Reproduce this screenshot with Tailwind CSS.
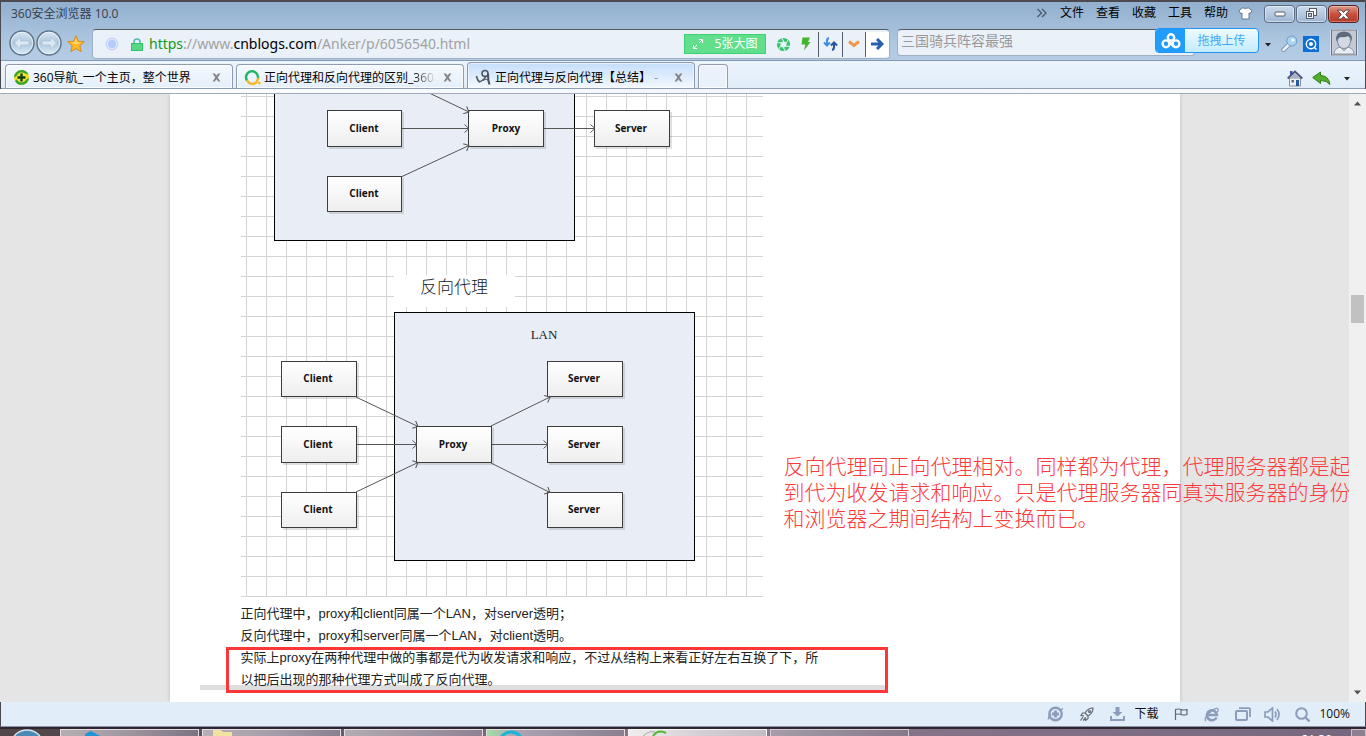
<!DOCTYPE html>
<html lang="zh-CN">
<head>
<meta charset="utf-8">
<title>正向代理与反向代理【总结】</title>
<script src="https://cdn.jsdelivr.net/npm/@tailwindcss/browser@4"></script>
</head>
<body class="flex h-screen flex-col overflow-hidden bg-[#e5e5e5] font-['Open_Sans','Noto_Sans_CJK_SC',sans-serif] text-xs text-black">

<header class="shrink-0 border-x border-t-2 border-[#4a4a50] bg-linear-to-b from-[#92afce] via-[#b0c9e2] to-[#bcd3ea]">
  <!-- title bar -->
  <div class="flex h-[27px] items-start pr-1.5 pl-2.5">
    <h1 class="pt-1 leading-4 text-[#33404f]">360安全浏览器 10.0</h1>
    <nav class="ml-auto flex gap-3 pt-[3px] leading-4" aria-label="菜单">
      <button aria-label="更多" class="w-3"><svg width="12" height="10" viewBox="0 0 12 10" fill="none" stroke="#4c5b6d" stroke-width="1.3"><path d="M1.500 1l4 4-4 4M6 1l4 4-4 4"/></svg></button>
      <button>文件</button><button>查看</button><button>收藏</button><button>工具</button><button>帮助</button>
    </nav>
    <button class="mt-[5px] ml-2.5" aria-label="皮肤"><svg width="15" height="13" viewBox="0 0 15 13"><path d="M4.500 1h1.500q1.500 1.500 3 0h1.500l3.500 2.500-1.500 3-1.500-.5v6h-7v-6l-1.500.5-1.500-3z" fill="#fff" stroke="#5c6f88" stroke-width=".9"/></svg></button>
    <div class="mt-[3px] ml-[11px] flex gap-px">
      <button aria-label="最小化" class="grid h-[18px] w-[31px] place-items-center rounded-sm border border-[#596b83] bg-linear-to-b from-[#cbdaea] via-[#b5c9df] to-[#9db7d3] inset-ring inset-ring-white/50"><svg width="12" height="6"><rect x="1" y="1" width="10" height="4" rx="1" fill="#fff" stroke="#555c68"/></svg></button>
      <button aria-label="还原" class="grid h-[18px] w-[31px] place-items-center rounded-sm border border-[#596b83] bg-linear-to-b from-[#cbdaea] via-[#b5c9df] to-[#9db7d3] inset-ring inset-ring-white/50"><svg width="13" height="12" fill="#fff" stroke="#555c68"><rect x="4.500" y=".5" width="7" height="7"/><rect x="1.500" y="3.500" width="7" height="7"/><rect x="3.500" y="5.500" width="3" height="3" fill="#b5c9df"/></svg></button>
      <button aria-label="关闭" class="grid h-[18px] w-[31px] place-items-center rounded-sm border border-[#5a2020] bg-linear-to-b from-[#dd9a8d] via-[#c9503c] to-[#b8382a] inset-ring inset-ring-white/30"><svg width="15" height="11" viewBox="0 0 13 10"><path d="M1 1h3.500l2 2.200L8.500 1H12L8.500 5 12 9H8.500l-2-2.200L4.500 9H1l3.500-4z" fill="#fff" stroke="#5a4448" stroke-width=".9"/></svg></button>
    </div>
  </div>

  <!-- address bar, search, tools -->
  <div class="flex h-[31px] items-start pr-[7px] pl-[7px]">
    <div class="flex w-[54px]">
      <button aria-label="后退"><svg width="27" height="28" viewBox="0 0 27 28"><defs><linearGradient id="nav" x2="0" y2="1"><stop stop-color="#dbe7f2"/><stop offset=".5" stop-color="#afc6dc"/><stop offset="1" stop-color="#d9ecfa"/></linearGradient></defs><circle cx="14" cy="14" r="12" fill="url(#nav)" stroke="#60748c" stroke-width="1.500"/><circle cx="14" cy="14" r="10.700" fill="none" stroke="#eaf3fa" stroke-width=".8"/><path d="M6.500 14l6-6v4H21v4h-8.500v4z" fill="#dbe8f4" stroke="#a3bbd2" stroke-width=".6"/></svg></button>
      <button aria-label="前进"><svg width="27" height="28" viewBox="0 0 27 28"><circle cx="14" cy="14" r="12" fill="url(#nav)" stroke="#60748c" stroke-width="1.500"/><circle cx="14" cy="14" r="10.700" fill="none" stroke="#eaf3fa" stroke-width=".8"/><path d="M21.500 14l-6-6v4H7v4h8.500v4z" fill="#dbe8f4" stroke="#a3bbd2" stroke-width=".6"/></svg></button>
    </div>
    <button class="mt-1.5 mr-[7px] ml-[5px]" aria-label="收藏"><svg width="18" height="18" viewBox="0 0 18 18"><path d="M9 .8l2.400 5.500 5.800.5-4.400 4 1.300 5.900L9 13.600l-5.100 3.100 1.300-5.900-4.400-4 5.800-.5z" fill="#fbb829" stroke="#d98b1d"/><path d="M9 3l1.600 4.200 4 .4L9 9.500 3.400 7.600l4-.4z" fill="#ffd56b"/></svg></button>

    <div class="flex h-[30px] min-w-0 flex-1 items-center rounded-sm border border-[#9fb0c4] border-t-[#4f5b68] bg-[#eaf1f9] pl-3">
      <svg class="shrink-0" width="14" height="14"><circle cx="7" cy="7" r="6" fill="#d9e5fb" stroke="#bfd2f6"/><circle cx="7" cy="7" r="4" fill="#b3ccfa"/></svg>
      <svg class="mr-1.5 ml-3 shrink-0" width="12" height="13"><path d="M3 6V4a3 3 0 0 1 6 0v2" fill="none" stroke="#55b8b4" stroke-width="1.500"/><rect x=".5" y="5.500" width="11" height="7" fill="#59d884" stroke="#30c464"/></svg>
      <div role="textbox" aria-label="地址" contenteditable="true" spellcheck="false" class="min-w-0 flex-1 truncate font-['Noto_Sans',sans-serif] text-sm leading-6 text-[#a2a2a2] outline-none"><span class="text-[#189a18]">https</span>://www.<span class="text-black">cnblogs.com</span>/Anker/p/6056540.html</div>
      <button class="flex h-5 w-[82px] items-center justify-center gap-3 border border-[#3cd172] bg-[#62df8c] text-white"><svg width="10" height="10" fill="none" stroke="#fff"><path d="M6 .5h3.500V4M9.500.5l-3.500 3.500M.5 6v3.500H4M.5 9.500L4 6"/></svg>5张大图</button>
      <button class="ml-[10px]" aria-label="兼容模式"><svg width="15" height="15" viewBox="-7.500 -7.500 15 15"><circle r="4.800" fill="none" stroke="#37c66d" stroke-width="3.600"/><g stroke="#eaf1f9" stroke-width="1"><path id="bl" d="M2.500-1L5.500-6"/><use href="#bl" transform="rotate(60)"/><use href="#bl" transform="rotate(120)"/><use href="#bl" transform="rotate(180)"/><use href="#bl" transform="rotate(240)"/><use href="#bl" transform="rotate(300)"/></g></svg></button>
      <button class="ml-2.5" aria-label="极速模式"><svg width="10" height="14"><path d="M1.500.5H9L7 5h2.500L3 13.500l1.300-6H.5z" fill="#43b52a"/></svg></button>
      <div class="ml-[7px] flex h-[25px] divide-x divide-[#555f6b] border-l border-[#555f6b]">
        <button class="grid w-6 place-items-center" aria-label="刷新"><svg width="15" height="14" viewBox="0 0 15 14" fill="none" stroke-width="2"><path d="M6 1Q4 1.500 4 4v4M1 5.500l3 3 3-3" stroke="#3e8fdc"/><path d="M9 13q2-.5 2-3V6M8 8.500l3-3 3 3" stroke="#27539f"/></svg></button>
        <button class="grid w-[23px] place-items-center" aria-label="展开"><svg width="12" height="8"><path d="M1 1.500l5 4 5-4" fill="none" stroke="#ee9a4c" stroke-width="3"/></svg></button>
        <button class="grid w-[23px] place-items-center bg-white" aria-label="转到"><svg width="13" height="12" fill="none" stroke="#2a5fae" stroke-width="3"><path d="M0 6h11M6 1l5 5-5 5"/></svg></button>
      </div>
    </div>

    <div class="relative ml-[7px] shrink-0">
      <input aria-label="搜索" placeholder="三国骑兵阵容最强" class="h-[27px] w-[298px] rounded-sm border border-[#9fb0c4] border-t-[#4f5b68] bg-[#eaf1f9] px-[3px] pb-1 text-sm text-black outline-none placeholder:text-[#999]">
      <!-- floating upload target -->
      <button class="absolute -top-px left-[258px] flex h-[25px] w-[104px] overflow-hidden rounded-sm border border-[#2294f5] bg-linear-to-b from-[#eefaff] to-[#c4ecfd] text-[#42aaf5]">
        <span class="grid h-full w-[29px] place-items-center bg-[#209cfb]"><svg width="20" height="16" viewBox="0 0 20 16" fill="none" stroke="#fff" stroke-width="2.400"><circle cx="10" cy="4.500" r="3.200"/><circle cx="5" cy="10.800" r="3.400"/><circle cx="15" cy="10.800" r="3.400"/><path d="M7.500 8.500l5.500 5"/></svg></span>
        <span class="flex-1 leading-[23px]">拖拽上传</span>
      </button>
    </div>
    <button class="mt-[14px] ml-[70px]" aria-label="搜索选项"><svg width="6" height="4"><path d="M0 0h6L3 3.500z" fill="#222"/></svg></button>
    <button class="mt-1.5 ml-[10px]" aria-label="密码"><svg width="17" height="17" viewBox="0 0 17 17"><path d="M8 9.500l-5.500 5.300" stroke="#8094aa" stroke-width="4.500" stroke-linecap="round"/><path d="M8 9.500l-5.500 5.300" stroke="#eef5fb" stroke-width="2.500" stroke-linecap="round"/><circle cx="10.800" cy="6" r="5" fill="#a9d4f1" stroke="#6f9cc4"/><circle cx="12" cy="5" r="1.600" fill="#f1faff"/></svg></button>
    <button class="mt-[7px] ml-[5px]" aria-label="翻译"><svg width="16" height="16"><rect width="16" height="16" fill="#0d6ed6"/><circle cx="8" cy="8" r="4.700" fill="none" stroke="#fff" stroke-width="1.500"/><circle cx="8" cy="8" r="2" fill="#fff"/><path d="M11 11l2.500 2.500" stroke="#fff" stroke-width="1.500"/></svg></button>
    <button class="ml-[11px]" aria-label="账户"><svg width="28" height="27" viewBox="0 0 28 27"><rect x="1" y=".5" width="26" height="26" rx="1" fill="#c3cad6" stroke="#f4f6f9"/><rect x="1.500" y="1" width="25" height="25" fill="none" stroke="#6d7683"/><path d="M4 25q0-6 7-7h6q7 1 7 7z" fill="#e9edf2" stroke="#8d98a8"/><path d="M10 18l4 4 4-4" fill="#cfd6e0" stroke="#8d98a8"/><ellipse cx="14" cy="12" rx="6.500" ry="7.500" fill="#d3dae4" stroke="#7b8696"/><path d="M6 12.500Q5 2.500 14 2.500t8 10q-1-4-3.500-5.500-4.500 2-8 1-3 1-4.500 4.500z" fill="#5f6b7d"/></svg></button>
  </div>

  <!-- tab strip -->
  <div class="flex h-[29px] items-end border-y border-t-[#8199b5] border-b-[#8f9db4] bg-linear-to-b from-[#ecf4fd] to-[#e0edf9] pl-1" role="tablist">
    <div class="flex h-6 w-[228px] items-center rounded-t-sm border border-b-0 border-[#8f9bb0] bg-linear-to-b from-[#f5f9fe] to-[#e4effa] px-[7px] pt-0.5 inset-ring inset-ring-white/80">
      <svg width="17" height="17" viewBox="0 0 17 17"><circle cx="8.500" cy="8.500" r="7.500" fill="#f3dc20"/><path d="M8.500 1a7.500 7.500 0 0 1 7 5q-4-3-8-1T1 8.500a7.500 7.500 0 0 1 7.500-7.500M16 9q-4 3-8 1.500T2 12a7.500 7.500 0 0 0 14-3" fill="#37a532"/><circle cx="8.500" cy="8.500" r="5" fill="#f2e829"/><path d="M8.500 4.500v8M4.500 8.500h8" stroke="#123f20" stroke-width="2.400"/></svg>
      <button role="tab" class="ml-[3px] min-w-0 flex-1 truncate text-left">360导航_一个主页，整个世界</button>
      <button aria-label="关闭标签" class="mr-1"><svg width="9" height="9"><path d="M.5.5h2.300l1.700 2 1.700-2h2.300L5.700 4.500l2.800 4H6.200l-1.700-2.200-1.700 2.200H.5l2.800-4z" fill="#85868b"/></svg></button>
    </div>
    <div class="ml-[3px] flex h-6 w-[228px] items-center rounded-t-sm border border-b-0 border-[#8f9bb0] bg-linear-to-b from-[#f5f9fe] to-[#e4effa] px-[7px] pt-0.5 inset-ring inset-ring-white/80">
      <svg width="17" height="17" viewBox="0 0 17 17" fill="none" stroke-width="2.500"><path d="M14 9a6 6 0 1 0-11 2.500" stroke="#25b566"/><path d="M3 11.500q4 6 10 1.500M14 9q0 2-1.500 3.500" stroke="#f4b72e"/><path d="M14 14h2.500" stroke="#f4b72e"/></svg>
      <button role="tab" class="ml-[3px] min-w-0 flex-1 overflow-hidden text-left whitespace-nowrap">正向代理和反向代理的区别_<span class="bg-linear-to-r from-black to-black/10 bg-clip-text text-transparent">360</span></button>
      <button aria-label="关闭标签" class="mr-1 ml-2"><svg width="9" height="9"><path d="M.5.5h2.300l1.700 2 1.700-2h2.300L5.700 4.500l2.800 4H6.200l-1.700-2.200-1.700 2.200H.5l2.800-4z" fill="#85868b"/></svg></button>
    </div>
    <div class="ml-[3px] flex h-[26px] w-[228px] items-center rounded-t-sm border border-b-0 border-[#8f9bb0] bg-linear-to-b from-[#c5defb] to-[#f3f8fe] px-[7px] pt-1 inset-ring inset-ring-white/50">
      <svg width="17" height="17" viewBox="0 0 17 17" fill="none" stroke="#4c525c" stroke-width="1.500"><path d="M1.500 7q1 5.500 4 6M3.500 13q5-1 7.500-6"/><circle cx="10" cy="4.500" r="3"/><path d="M13 4.500q0 7 1.500 11" stroke-width="2"/><path d="M8 11.500q3-3 5.500 0" stroke-width="1"/></svg>
      <button role="tab" aria-selected="true" class="ml-[3px] min-w-0 flex-1 overflow-hidden text-left whitespace-nowrap">正向代理与反向代理【总结】 <span class="text-[#8193aa]">-</span></button>
      <button aria-label="关闭标签" class="mr-1"><svg width="9" height="9"><path d="M.5.5h2.300l1.700 2 1.700-2h2.300L5.700 4.500l2.800 4H6.200l-1.700-2.200-1.700 2.200H.5l2.800-4z" fill="#85868b"/></svg></button>
    </div>
    <button aria-label="新标签" class="ml-[3px] h-6 w-[30px] rounded-t-sm border border-b-0 border-[#8f9bb0] bg-[#e9f2fb] inset-ring inset-ring-white/80"></button>
    <div class="ml-auto flex h-full items-center gap-[9px] pt-2 pr-[15px]">
      <button aria-label="主页"><svg width="16" height="17" viewBox="0 0 16 17"><path d="M2.500 8h11v8h-11z" fill="#eef0f4" stroke="#8a8f9c"/><path d="M3 1h2.500v4H3z" fill="#3c4fb8"/><path d="M.7 8.500L8 1.500l7.300 7" fill="none" stroke="#4a5278" stroke-width="1.800"/><path d="M2.500 8L8 3l5.500 5z" fill="#a9b1c6"/><path d="M9 10h3v6H9z" fill="#2858a4"/><path d="M4.500 10h2.500v2.500H4.500z" fill="#616978"/></svg></button>
      <button aria-label="撤销"><svg width="19" height="15" viewBox="0 0 19 15"><path d="M.7 6.500L8.500 1v3.500q8 0 9.500 9-3-4-9.500-4v3z" fill="#52ad2c" stroke="#2e8018"/></svg></button>
      <button class="ml-1" aria-label="撤销列表"><svg width="6" height="4"><path d="M0 0h6L3 3.500z" fill="#222"/></svg></button>
    </div>
  </div>
</header>
<div class="h-[5px] shrink-0 border-b border-[#a3a9b8] bg-linear-to-r from-white via-[#f3f7fc] to-[#f8fafd]"></div>

<main class="relative flex min-h-0 flex-1">
  <div class="min-w-0 flex-1 overflow-hidden">
    <article class="relative mx-auto h-full max-w-[1010px] bg-white pl-[71px] shadow-[0_0_4px_#bbb]">
      <svg class="block" width="522" height="503" viewBox="241 94 522 503" role="img" aria-label="正向代理与反向代理结构图">
        <defs>
          <pattern id="grid" x="246" y="96" width="20" height="20" patternUnits="userSpaceOnUse"><path d="M.5 0v20M0 .5h20" stroke="#d4d4d4" fill="none"/></pattern>
          <linearGradient id="node" x2="0" y2="1"><stop stop-color="#fff"/><stop offset="1" stop-color="#eee"/></linearGradient>
          <marker id="tip" viewBox="0 0 7 9" refX="6" refY="4.500" markerWidth="7" markerHeight="9" markerUnits="userSpaceOnUse" orient="auto"><path d="M1.500.5l4.500 4-4.500 4" fill="none" stroke="#555"/></marker>
        </defs>
        <rect x="241" y="94" width="522" height="503" fill="url(#grid)"/>
        <rect x="394" y="275" width="121" height="32" fill="#fff"/>
        <g fill="#e9eef6" stroke="#000">
          <rect x="274.500" y="60.500" width="300" height="180"/>
          <rect x="394.500" y="312.500" width="300" height="248"/>
        </g>
        <!-- drop shadows -->
        <g fill="#000" fill-opacity=".12">
          <rect x="329" y="112" width="75" height="37"/><rect x="329" y="178" width="75" height="36"/><rect x="470" y="112" width="76" height="37"/><rect x="596" y="112" width="76" height="37"/>
          <rect x="283" y="363" width="76" height="36"/><rect x="283" y="428" width="76" height="37"/><rect x="283" y="494" width="76" height="36"/><rect x="418" y="428" width="76" height="37"/>
          <rect x="549" y="363" width="76" height="36"/><rect x="549" y="428" width="76" height="37"/><rect x="549" y="494" width="76" height="36"/>
        </g>
        <g fill="url(#node)" stroke="#3c3c3c">
          <rect x="327.500" y="110.500" width="74" height="36"/><rect x="327.500" y="176.500" width="74" height="35"/><rect x="468.500" y="110.500" width="75" height="36"/><rect x="594.500" y="110.500" width="75" height="36"/>
          <rect x="281.500" y="361.500" width="75" height="35"/><rect x="281.500" y="426.500" width="75" height="36"/><rect x="281.500" y="492.500" width="75" height="35"/><rect x="416.500" y="426.500" width="75" height="36"/>
          <rect x="547.500" y="361.500" width="75" height="35"/><rect x="547.500" y="426.500" width="75" height="36"/><rect x="547.500" y="492.500" width="75" height="35"/>
        </g>
        <g stroke="#555" fill="none">
          <path d="M402 80L469 112" marker-end="url(#tip)"/><path d="M402 128.500h67" marker-end="url(#tip)"/><path d="M402 176.500L469 145.500" marker-end="url(#tip)"/><path d="M544 128.500h51" marker-end="url(#tip)"/>
          <path d="M356 397L418 426.500" marker-end="url(#tip)"/><path d="M357 444.500h60" marker-end="url(#tip)"/><path d="M356 492L418 462.500" marker-end="url(#tip)"/>
          <path d="M491 426L550 397" marker-end="url(#tip)"/><path d="M492 444.500h56" marker-end="url(#tip)"/><path d="M491 463L550 492.500" marker-end="url(#tip)"/>
        </g>
        <g class="font-['Open_Sans',sans-serif] text-[10px] font-bold" text-anchor="middle" fill="#111">
          <text x="364" y="132">Client</text><text x="364" y="197">Client</text><text x="506" y="132">Proxy</text><text x="631" y="132">Server</text>
          <text x="318" y="382">Client</text><text x="318" y="448">Client</text><text x="318" y="513">Client</text><text x="453" y="448">Proxy</text>
          <text x="584" y="382">Server</text><text x="584" y="448">Server</text><text x="584" y="513">Server</text>
        </g>
        <g text-anchor="middle" fill="#222">
          <text class="font-['Noto_Sans_CJK_SC',sans-serif] text-[17px] font-light" x="454" y="293">反向代理</text>
          <text class="font-['Liberation_Serif',serif] text-[13px]" x="544" y="339">LAN</text>
        </g>
      </svg>
      <div class="absolute bottom-3 left-[30px] h-[5px] w-[686px] bg-[#dedede]"></div>
      <div class="relative w-[580px] pt-1.5 font-['Liberation_Sans','Noto_Sans_CJK_SC',sans-serif] text-[13px] leading-[22px] whitespace-nowrap text-[#222]">
        <p>正向代理中，proxy和client同属一个LAN，对server透明；</p>
        <p>反向代理中，proxy和server同属一个LAN，对client透明。</p>
        <p>实际上proxy在两种代理中做的事都是代为收发请求和响应，不过从结构上来看正好左右互换了下，所<br>以把后出现的那种代理方式叫成了反向代理。</p>
        <div class="absolute -bottom-0.5 -left-[15px] h-[46px] w-[662px] border-3 border-[#fb3737]"></div>
      </div>
      <p class="absolute top-[358px] left-[614px] w-[567px] font-['Noto_Sans_CJK_SC',sans-serif] text-[21px] leading-[26px] font-light whitespace-nowrap text-[#fb3b3b]">反向代理同正向代理相对。同样都为代理，代理服务器都是起<br>到代为收发请求和响应。只是代理服务器同真实服务器的身份<br>和浏览器之期间结构上变换而已。</p>
    </article>
  </div>
  <div class="flex w-[17px] shrink-0 flex-col items-center bg-[#f0f0f0] py-1.5">
    <svg width="9" height="6"><path d="M1 5.500h7L4.500 1.500z" fill="#505050"/></svg>
    <div class="flex w-full flex-1 flex-col items-center">
      <div class="grow-19"></div><div class="h-7 w-[13px] bg-[#c1c1c1]"></div><div class="grow-37"></div>
    </div>
    <svg width="9" height="6"><path d="M1 .5h7L4.500 4.500z" fill="#505050"/></svg>
  </div>
</main>

<footer class="shrink-0">
  <div class="flex h-[25px] items-center justify-end border-x border-b border-x-[#4a4a50] border-b-[#8d91a8] bg-[#e1edf8] pr-[15px] text-[#111]">
    <button aria-label="医生" class="mr-4"><svg width="17" height="16" viewBox="0 0 17 16" fill="none" stroke="#8c9cba"><circle cx="8.500" cy="8" r="6.200" stroke-width="2.400"/><path d="M8.500 4.500v7M5 8h7" stroke-width="2.800"/><path d="M1.500 13.500Q1 11 4 8M13 4.500l3-2" stroke-width="1.500"/></svg></button>
    <button aria-label="加速" class="mr-4"><svg width="14" height="14" viewBox="0 0 14 14" fill="none" stroke="#656a72" stroke-width="1.200"><path d="M13 1Q8 1 5 6l3 3q5-3 5-8zM5 6H2.500L1 8.500l3 .3M8 9v2.500L5.500 13.500 5.200 10M3 10l-2.500 3.500M5 11.500L3 13.500"/><circle cx="9.500" cy="4.500" r="1"/></svg></button>
    <button class="mr-4 flex items-center gap-[9px]"><svg width="15" height="14" viewBox="0 0 15 14"><path d="M5.500 0h4v5h3l-5 4.500-5-4.500h3z" fill="#8c9cba"/><path d="M1 9v4h13V9" fill="none" stroke="#8c9cba" stroke-width="2"/></svg>下载</button>
    <button aria-label="标记" class="mr-4"><svg width="14" height="12" viewBox="0 0 14 12" fill="none" stroke="#656a72" stroke-width="1.200"><path d="M1.500 12V1.500Q4 .5 7 1.500t6 0v5q-3 1-6 0t-5.500 0M7 1.500v5"/></svg></button>
    <button aria-label="浏览模式" class="mr-4"><svg width="15" height="15" viewBox="0 0 15 15" fill="none" stroke="#8c9cba"><path d="M12.500 10.500A5 5 0 1 1 13 8H4" stroke-width="2.600"/><path d="M2 14Q-.5 12 5 6.500T13.500 1.500q1.500 1 0 3.500" stroke-width="1.300"/></svg></button>
    <button aria-label="窗口" class="mr-[13px]"><svg width="16" height="14" viewBox="0 0 16 14" fill="none" stroke="#8c9cba" stroke-width="2"><rect x="1" y="4" width="11" height="9" rx="1"/><path d="M4 1.200h10q1 0 1 1V10" stroke-width="1.800"/></svg></button>
    <button aria-label="声音" class="mr-[14px]"><svg width="17" height="15" viewBox="0 0 17 15" fill="none" stroke="#8c9cba" stroke-width="1.700"><path d="M1 5h3l4.500-4v13L4 10H1z"/><path d="M11 4.500q2 3 0 6M13 2q4 5.500 0 11"/></svg></button>
    <button class="flex items-center gap-[9px]"><svg width="15" height="15" fill="none" stroke="#8c9cba"><circle cx="6.500" cy="6.500" r="5.300" stroke-width="2"/><path d="M10.500 10.500l4 4" stroke-width="2.400"/></svg>100%</button>
  </div>
  <!-- visible strip of the taskbar -->
  <div class="flex h-[9px] gap-[3px] overflow-hidden border-t-2 border-[#2e2730] bg-linear-to-r from-[#4d4148] via-[#8c7a8d] to-[#77677e]">
    <button aria-label="开始" class="w-[57px] shrink-0 bg-[#51474b]"><svg class="ml-3" width="30" height="7"><ellipse cx="15" cy="14" rx="15" ry="13" fill="#4a8ab5" stroke="#d3e3ea" stroke-width="1.500"/></svg></button>
    <button aria-label="任务一" class="w-[139px] shrink-0 border border-b-0 border-[#e3dde3] bg-linear-to-r from-[#b7aeb2] via-[#9f95a0] to-[#7d7280] pl-6"><svg width="16" height="6"><path d="M0 4l6-3 9 5H0z" fill="#2195d5"/></svg></button>
    <button aria-label="任务二" class="w-[139px] shrink-0 border border-b-0 border-[#e3dde3] bg-linear-to-r from-[#b7b0b4] via-[#a79eab] to-[#8a7f8f] pl-2.5"><svg width="20" height="6"><path d="M0 0h8l2 2h9v4H0z" fill="#f1e2a0"/></svg></button>
    <button aria-label="任务三" class="w-[139px] shrink-0 border border-b-0 border-[#e3dde3] bg-linear-to-r from-[#b4abb2] to-[#8e8293]"></button>
    <button aria-label="任务四" class="w-[139px] shrink-0 border border-b-0 border-[#e3dde3] bg-linear-to-r from-[#a0dfa5] via-[#aea5b4] via-20% to-[#8a7f8f] pl-3"><svg width="24" height="6"><ellipse cx="12" cy="12" rx="11" ry="10" fill="none" stroke="#18b7d8" stroke-width="3"/></svg></button>
    <button aria-label="任务五" class="w-[139px] shrink-0 border border-b-0 border-[#f5f5f5] bg-linear-to-r from-[#efeeef] via-[#d6d0d6] to-[#c4bdc5] pl-3.5"><svg width="24" height="6"><path d="M0 6q8-7 14-3" stroke="#aaa" fill="none"/><path d="M10 6q5-7 13-3" stroke="#52b52e" stroke-width="2" fill="none"/></svg></button>
    <button aria-label="任务六" class="w-[139px] shrink-0 border border-b-0 border-[#d3cbd3] bg-linear-to-r from-[#a69da8] to-[#85798a]"></button>
    <time class="mr-4 ml-auto pt-0.5 leading-[18px] text-white">21:30</time>
    <button aria-label="显示桌面" class="w-[15px] shrink-0 border border-b-0 border-[#c9bfcc] bg-[#8c8091]"></button>
  </div>
</footer>
</body>
</html>
